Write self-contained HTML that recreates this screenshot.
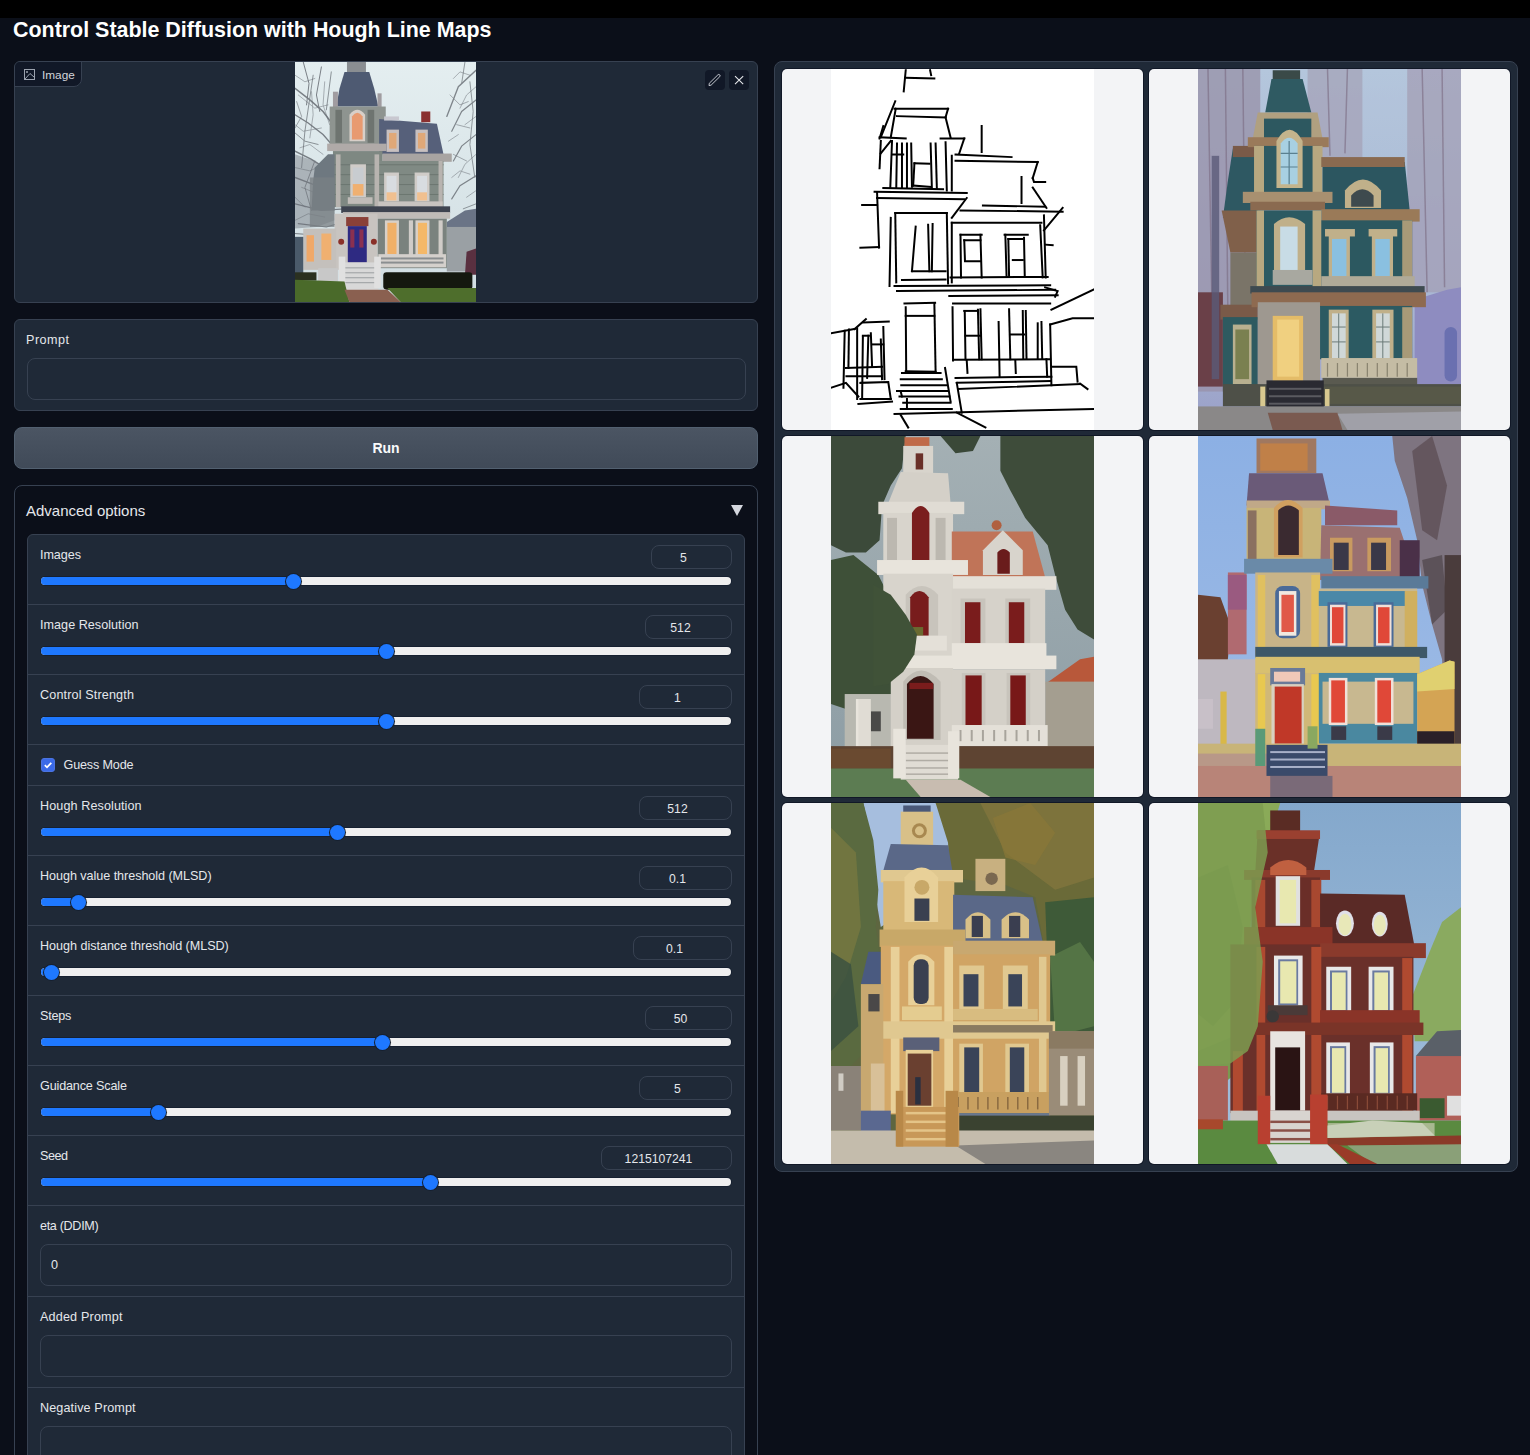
<!DOCTYPE html>
<html><head><meta charset="utf-8">
<style>
*{box-sizing:border-box;margin:0;padding:0}
html,body{width:1530px;height:1455px;overflow:hidden;background:#0b0f19;font-family:"Liberation Sans",sans-serif;color:#e5e7eb}
.a{position:absolute}
#topbar{left:0;top:0;width:1530px;height:18px;background:#000}
#title{left:13px;top:17px;font-size:21.43px;font-weight:700;color:#fff;white-space:nowrap;line-height:26px}
.blk{background:#1f2937;border:1px solid #374151;border-radius:6px}
.lbl{font-size:12.6px;color:#e5e7eb;white-space:nowrap;line-height:14px}
.inp{background:#1f2937;border:1px solid #374151;border-radius:8px}
.num{border:1px solid #374151;border-radius:8px;background:#1f2937;height:24px;font-size:12.2px;color:#e5e7eb;text-align:center;line-height:24px;padding-right:16px}
.sep{left:27px;width:718px;height:1px;background:#374151}
.track{height:8px;border-radius:4px;background:#efefef;box-shadow:0 0 0 1px #162030}
.fill{left:0;top:0;height:8px;border-radius:4px 0 0 4px;background:#1e78ff}
.thumb{width:15px;height:15px;border-radius:50%;background:#1e78ff;top:-3.5px;box-shadow:0 0 0 1px #162030}
.cell{background:#f3f4f6;border-radius:5px;width:361px;height:361px;overflow:hidden;box-shadow:0 0 0 1px #111827}
.cell svg{position:absolute;left:49px;top:0;width:263px;height:361px}
</style></head><body>
<div id="topbar" class="a"></div>
<div id="title" class="a">Control Stable Diffusion with Hough Line Maps</div>

<!-- Image input block -->
<div class="a blk" style="left:14px;top:61px;width:744px;height:242px;overflow:hidden">
  <div class="a" style="left:-1px;top:-1px;width:68px;height:26px;background:#111827;border:1px solid #374151;border-radius:0 0 8px 0"></div>
  <svg class="a" style="left:9px;top:7px" width="11" height="11" viewBox="0 0 11 11"><rect x="0.5" y="0.5" width="10" height="10" fill="none" stroke="#9ca3af" stroke-width="1"/><circle cx="3" cy="3" r="1" fill="#9ca3af"/><path d="M1 10 L6 4.5 L10 8" fill="none" stroke="#9ca3af" stroke-width="1"/></svg>
  <div class="a" style="left:27px;top:5.5px;font-size:11.8px;color:#d1d5db;line-height:14px">Image</div>
  <div id="photo" class="a" style="left:280px;top:0px;width:181px;height:240px;background:#dfe5ea;overflow:hidden"><svg width="181" height="240" viewBox="0 0 1097 1455" preserveAspectRatio="none" style="position:absolute;left:0;top:0">
<defs><linearGradient id="psky" x1="0" y1="0" x2="0" y2="1"><stop offset="0" stop-color="#e4eef0"/><stop offset="1" stop-color="#d0dde2"/></linearGradient></defs>
<rect width="1097" height="1455" fill="url(#psky)"/>
<!-- trees left -->
<g stroke="#5e636a" fill="none" opacity="0.8" stroke-linecap="round">
<path d="M0 160 L90 230 L170 300 L230 380 L260 500" stroke-width="9"/><path d="M0 320 L80 370 L170 440 L240 520" stroke-width="8"/><path d="M50 0 L85 130 L70 260" stroke-width="6"/><path d="M160 30 L130 200 L150 300" stroke-width="6"/>
<path d="M0 540 L100 590 L210 660 L300 740" stroke-width="9"/><path d="M0 700 L130 750 L280 810 L360 850" stroke-width="8"/><path d="M0 860 L160 900 L300 890 L380 860" stroke-width="8"/><path d="M20 980 L190 1000 L330 960" stroke-width="7"/>
<path d="M0 1040 L140 1050" stroke-width="6"/><path d="M220 60 L190 290" stroke-width="5"/><path d="M110 80 L60 420 L40 640" stroke-width="5"/><path d="M0 430 L60 480 L140 500" stroke-width="5"/>
<path d="M10 240 L40 330 L0 400" stroke-width="4"/><path d="M120 600 L60 760 L100 900" stroke-width="5"/><path d="M200 760 L150 880" stroke-width="5"/>
</g>
<path d="M0 560 L120 600 L230 700 L240 960 L130 1000 L0 1010 Z" fill="#70767e" opacity="0.45"/>
<!-- trees right -->
<g stroke="#5e636a" fill="none" opacity="0.75" stroke-linecap="round">
<path d="M1097 50 L990 150 L920 330" stroke-width="8"/><path d="M1097 230 L1010 300 L950 420" stroke-width="7"/><path d="M1097 440 L1010 510 L960 600" stroke-width="7"/><path d="M1097 690 L1000 750 L950 830" stroke-width="7"/><path d="M1030 0 L1010 130" stroke-width="5"/><path d="M1097 860 L1020 890" stroke-width="5"/>
<path d="M940 200 L1000 260 L1050 240" stroke-width="4"/><path d="M980 380 L1060 400" stroke-width="4"/><path d="M960 560 L1040 600" stroke-width="4"/><path d="M1060 120 L1080 300 L1060 500 L1090 700" stroke-width="5"/>
</g>
<g stroke="#6a6f76" fill="none" opacity="0.6" stroke-linecap="round" stroke-width="5">
<path d="M0 80 L60 120 L120 100"/><path d="M20 200 L120 280 L200 260"/><path d="M0 380 L50 420 L160 400"/><path d="M30 520 L90 500 L170 560"/><path d="M0 640 L90 660 L180 620"/><path d="M40 760 L140 800 L230 760"/><path d="M0 820 L60 880"/><path d="M100 180 L110 320 L90 460"/><path d="M180 120 L170 260 L210 380"/><path d="M0 960 L80 920 L180 940"/>
<path d="M1097 150 L1040 200 L1000 280"/><path d="M1097 330 L1030 380"/><path d="M1097 560 L1030 620 L990 700"/><path d="M1097 780 L1040 820"/><path d="M960 100 L1000 60 L1060 80"/><path d="M930 480 L990 440"/><path d="M950 700 L1000 660 L1060 680"/>
</g>
<!-- right house -->
<polygon points="920,970 1030,900 1097,890 1097,1000 920,1010" fill="#6a7486"/>
<rect x="920" y="1000" width="177" height="270" fill="#9aa0a4"/>
<path d="M1040 1150 L1097 1130 L1097 1290 L1030 1290 Z" fill="#5a3040"/>
<!-- tower top -->
<rect x="315" y="0" width="115" height="65" fill="#8a8e92"/>
<polygon points="300,60 450,60 480,160 505,270 250,270 270,160" fill="#4e5a72"/>
<rect x="230" y="180" width="30" height="100" fill="#a09ca0"/><rect x="500" y="190" width="25" height="90" fill="#a09ca0"/>
<!-- tower body -->
<rect x="210" y="270" width="340" height="240" fill="#8e9490"/>
<rect x="245" y="290" width="40" height="200" fill="#6e7470"/><rect x="440" y="290" width="40" height="200" fill="#6e7470"/>
<path d="M330 480 L330 320 Q378 260 425 320 L425 480 Z" fill="#d8cfc8"/>
<path d="M345 470 L345 330 Q378 285 410 330 L410 470 Z" fill="#e89a70"/>
<!-- main mansard -->
<polygon points="510,345 860,375 900,560 510,560" fill="#56607a"/>
<rect x="540" y="330" width="90" height="25" fill="#c8c8d0"/>
<rect x="765" y="300" width="55" height="65" fill="#8a3030"/>
<rect x="555" y="410" width="75" height="135" fill="#c8c0c0"/><rect x="570" y="430" width="45" height="95" fill="#e0a878"/>
<rect x="730" y="410" width="75" height="135" fill="#c8c0c0"/><rect x="745" y="430" width="45" height="95" fill="#e0a878"/>
<!-- cornice -->
<rect x="195" y="495" width="360" height="45" fill="#b0aaa8"/>
<rect x="530" y="555" width="420" height="50" fill="#a8a4a2"/>
<!-- main facade -->
<rect x="230" y="540" width="300" height="340" fill="#7e8882"/>
<rect x="510" y="600" width="390" height="280" fill="#808a84"/>
<g fill="#6c7670"><rect x="230" y="620" width="670" height="6"/><rect x="230" y="680" width="670" height="6"/><rect x="230" y="740" width="670" height="6"/><rect x="230" y="800" width="670" height="6"/></g>
<rect x="248" y="560" width="28" height="320" fill="#b8b4b0"/><rect x="482" y="560" width="28" height="320" fill="#b8b4b0"/><rect x="870" y="600" width="25" height="280" fill="#b8b4b0"/>
<rect x="335" y="620" width="95" height="200" fill="#d0ccc8"/><rect x="350" y="640" width="65" height="170" fill="#c8ccd0"/><rect x="350" y="740" width="65" height="70" fill="#f0b070"/>
<rect x="540" y="670" width="90" height="175" fill="#d0ccc8"/><rect x="555" y="690" width="60" height="150" fill="#d8dce0"/><rect x="555" y="790" width="60" height="50" fill="#f0c090"/>
<rect x="725" y="670" width="90" height="175" fill="#d0ccc8"/><rect x="740" y="690" width="60" height="150" fill="#d8dce0"/><rect x="740" y="790" width="60" height="50" fill="#f0c090"/>
<rect x="320" y="820" width="150" height="40" fill="#c0bcb8"/><rect x="505" y="845" width="390" height="35" fill="#c8c4c0"/>
<!-- left wing -->
<polygon points="120,640 200,560 240,560 240,900 100,900 110,720" fill="#6e7880"/>
<rect x="90" y="700" width="150" height="300" fill="#7a8084" opacity="0.75"/>
<!-- porch roof -->
<rect x="280" y="875" width="660" height="40" fill="#3e4450"/>
<rect x="290" y="910" width="650" height="40" fill="#c0bcb8"/>
<!-- porch -->
<rect x="500" y="950" width="420" height="300" fill="#7a827e"/>
<rect x="545" y="960" width="85" height="210" fill="#d8d0c8"/><rect x="560" y="975" width="55" height="190" fill="#f0b068"/>
<rect x="730" y="960" width="85" height="210" fill="#d8d0c8"/><rect x="745" y="975" width="55" height="190" fill="#f4b868"/>
<rect x="690" y="960" width="25" height="270" fill="#d0ccc8"/><rect x="870" y="960" width="25" height="270" fill="#d0ccc8"/>
<rect x="505" y="1165" width="410" height="80" fill="#d4d0cc"/>
<g fill="#8a8e90"><rect x="520" y="1185" width="380" height="12"/><rect x="520" y="1210" width="380" height="12"/></g>
<rect x="240" y="920" width="260" height="340" fill="#c8c4c0"/>
<rect x="310" y="940" width="135" height="55" fill="#8a4038"/>
<rect x="320" y="995" width="115" height="220" fill="#2e2a82"/>
<rect x="335" y="1015" width="25" height="110" fill="#8a3050"/><rect x="390" y="1015" width="25" height="110" fill="#8a3050"/>
<circle cx="280" cy="1090" r="18" fill="#8a3028"/><circle cx="478" cy="1090" r="18" fill="#8a3028"/>
<!-- left bay -->
<rect x="50" y="1010" width="200" height="250" fill="#c4c0bc"/>
<rect x="70" y="1050" width="45" height="160" fill="#f0a868"/><rect x="160" y="1040" width="60" height="160" fill="#f0b070"/>
<rect x="0" y="1060" width="50" height="220" fill="#4a5a6a"/>
<!-- steps -->
<rect x="295" y="1215" width="210" height="170" fill="#d8d8d8"/>
<g fill="#9a9ea0"><rect x="300" y="1245" width="200" height="6"/><rect x="300" y="1275" width="200" height="6"/><rect x="300" y="1305" width="200" height="6"/><rect x="300" y="1335" width="200" height="6"/></g>
<rect x="265" y="1180" width="40" height="190" fill="#e0e0e0"/><rect x="480" y="1180" width="40" height="190" fill="#e0e0e0"/>
<rect x="140" y="1250" width="120" height="80" fill="#c8c8c8"/>
<!-- hedge -->
<rect x="535" y="1275" width="540" height="105" rx="20" fill="#14180f"/>
<rect x="0" y="1275" width="130" height="50" fill="#2a3020"/>
<!-- grass -->
<polygon points="0,1320 300,1330 330,1455 0,1455" fill="#4a6a2a"/>
<polygon points="560,1370 1097,1370 1097,1455 640,1455" fill="#4e6e2c"/>
<polygon points="300,1380 560,1380 640,1455 330,1455" fill="#8a6050"/>
</svg>
</div>
  <div class="a" style="left:690px;top:8px;width:20px;height:20px;background:#111827;border-radius:4px"><svg class="a" style="left:0;top:0" width="20" height="20" viewBox="0 0 20 20"><path d="M4.29 13.27 L12.89 4.87 A1.3 1.3 0 0 1 14.71 6.73 L6.11 15.13 L4 15.6 Z" fill="none" stroke="#d1d5db" stroke-width="0.9" stroke-linejoin="round"/></svg></div>
  <div class="a" style="left:714px;top:8px;width:20px;height:20px;background:#111827;border-radius:4px"><svg class="a" style="left:0;top:0" width="20" height="20" viewBox="0 0 20 20"><path d="M6 6.2 L14.2 14.2 M14.2 6.2 L6 14.2" fill="none" stroke="#e5e7eb" stroke-width="1.1"/></svg></div>
</div>

<!-- Prompt block -->
<div class="a blk" style="left:14px;top:319px;width:744px;height:92px">
  <div class="a lbl" style="left:11px;top:13px;letter-spacing:0.48px">Prompt</div>
  <div class="a inp" style="left:12px;top:38px;width:719px;height:42px"></div>
</div>

<!-- Run button -->
<div class="a" style="left:14px;top:427px;width:744px;height:42px;border-radius:8px;background:linear-gradient(#4b5563,#404a58);border:1px solid #526070;font-weight:700;font-size:14px;color:#f9fafb;text-align:center;line-height:40px">Run</div>

<!-- Accordion -->
<div class="a" style="left:14px;top:485px;width:744px;height:1000px;border:1px solid #374151;border-radius:8px;background:#0b0f19"></div>
<div class="a" style="left:26px;top:502px;font-size:15px;color:#e5e7eb;line-height:18px;white-space:nowrap">Advanced options</div>
<svg class="a" style="left:730px;top:504px" width="14" height="13" viewBox="0 0 14 13"><polygon points="1,1 13,1 7,12" fill="#d4d7de"/></svg>
<div id="form" class="a" style="left:27px;top:534px;width:718px;height:1000px;background:#1f2937;border:1px solid #374151;border-radius:6px"></div>
<div class="a sep" style="top:604px"></div>
<div class="a sep" style="top:674px"></div>
<div class="a sep" style="top:744px"></div>
<div class="a sep" style="top:785px"></div>
<div class="a sep" style="top:855px"></div>
<div class="a sep" style="top:925px"></div>
<div class="a sep" style="top:995px"></div>
<div class="a sep" style="top:1065px"></div>
<div class="a sep" style="top:1135px"></div>
<div class="a sep" style="top:1205px"></div>
<div class="a sep" style="top:1296px"></div>
<div class="a sep" style="top:1387px"></div>
<div class="a lbl" style="left:40px;top:548px;letter-spacing:-0.06px">Images</div>
<div class="a num" style="left:651px;top:545px;width:81px">5</div>
<div class="a track" style="left:41px;top:577px;width:690px"><div class="a fill" style="width:252.5px"></div><div class="a thumb" style="left:245.0px"></div></div>
<div class="a lbl" style="left:40px;top:618px;letter-spacing:0.033px">Image Resolution</div>
<div class="a num" style="left:645px;top:615px;width:87px">512</div>
<div class="a track" style="left:41px;top:647px;width:690px"><div class="a fill" style="width:345px"></div><div class="a thumb" style="left:337.5px"></div></div>
<div class="a lbl" style="left:40px;top:688px;letter-spacing:0.147px">Control Strength</div>
<div class="a num" style="left:639px;top:685px;width:93px">1</div>
<div class="a track" style="left:41px;top:717px;width:690px"><div class="a fill" style="width:345px"></div><div class="a thumb" style="left:337.5px"></div></div>
<div class="a lbl" style="left:40px;top:799px;letter-spacing:0.1px">Hough Resolution</div>
<div class="a num" style="left:639px;top:796px;width:93px">512</div>
<div class="a track" style="left:41px;top:828px;width:690px"><div class="a fill" style="width:296px"></div><div class="a thumb" style="left:288.5px"></div></div>
<div class="a lbl" style="left:40px;top:869px;letter-spacing:-0.048px">Hough value threshold (MLSD)</div>
<div class="a num" style="left:639px;top:866px;width:93px">0.1</div>
<div class="a track" style="left:41px;top:898px;width:690px"><div class="a fill" style="width:37.3px"></div><div class="a thumb" style="left:29.799999999999997px"></div></div>
<div class="a lbl" style="left:40px;top:939px;letter-spacing:-0.03px">Hough distance threshold (MLSD)</div>
<div class="a num" style="left:633px;top:936px;width:99px">0.1</div>
<div class="a track" style="left:41px;top:968px;width:690px"><div class="a fill" style="width:10px"></div><div class="a thumb" style="left:2.5px"></div></div>
<div class="a lbl" style="left:40px;top:1009px;letter-spacing:-0.25px">Steps</div>
<div class="a num" style="left:645px;top:1006px;width:87px">50</div>
<div class="a track" style="left:41px;top:1038px;width:690px"><div class="a fill" style="width:341px"></div><div class="a thumb" style="left:333.5px"></div></div>
<div class="a lbl" style="left:40px;top:1079px;letter-spacing:-0.154px">Guidance Scale</div>
<div class="a num" style="left:639px;top:1076px;width:93px">5</div>
<div class="a track" style="left:41px;top:1108px;width:690px"><div class="a fill" style="width:117px"></div><div class="a thumb" style="left:109.5px"></div></div>
<div class="a lbl" style="left:40px;top:1149px;letter-spacing:-0.467px">Seed</div>
<div class="a num" style="left:601px;top:1146px;width:131px">1215107241</div>
<div class="a track" style="left:41px;top:1178px;width:690px"><div class="a fill" style="width:389px"></div><div class="a thumb" style="left:381.5px"></div></div>
<div class="a" style="left:41px;top:758px;width:14px;height:14px;border-radius:3px;background:#3b6ae8;border:1px solid #4b74e0"><svg class="a" style="left:1px;top:1px" width="10" height="10" viewBox="0 0 10 10"><path d="M1.8 5.2 L4 7.3 L8.3 2.8" fill="none" stroke="#fff" stroke-width="1.8"/></svg></div>
<div class="a lbl" style="left:63.5px;top:758px;letter-spacing:-0.156px">Guess Mode</div>
<div class="a lbl" style="left:40px;top:1219px;letter-spacing:-0.322px">eta (DDIM)</div>
<div class="a inp" style="left:40px;top:1244px;width:692px;height:42px"></div>
<div class="a lbl" style="left:51px;top:1258px">0</div>
<div class="a lbl" style="left:40px;top:1310px;letter-spacing:0.173px">Added Prompt</div>
<div class="a inp" style="left:40px;top:1335px;width:692px;height:42px"></div>
<div class="a lbl" style="left:40px;top:1401px;letter-spacing:0.129px">Negative Prompt</div>
<div class="a inp" style="left:40px;top:1426px;width:692px;height:42px"></div>

<!-- Gallery -->
<div class="a" style="left:774px;top:61px;width:744px;height:1111px;background:#1f2937;border:1px solid #374151;border-radius:8px"></div>
<div class="a cell" style="left:782px;top:69px"><svg width="262" height="361" viewBox="0 0 1056 1455" preserveAspectRatio="none" style="position:absolute;left:49px;top:0">
<rect width="1056" height="1455" fill="#fff"/>
<g stroke="#000" stroke-width="8" fill="none" stroke-linecap="square">
<path d="M300 5 L292 90"/><path d="M298 35 L415 38"/><path d="M398 5 L402 25"/>
<path d="M258 130 L200 275"/><path d="M210 230 L195 280"/><path d="M255 160 L470 160"/><path d="M260 160 L240 275"/><path d="M265 190 L460 195"/><path d="M470 160 L460 195"/><path d="M460 195 L480 275"/>
<path d="M195 275 L300 280"/><path d="M440 280 L535 280"/><path d="M535 280 L515 340"/><path d="M200 290 L195 400"/><path d="M200 340 L240 290"/>
<path d="M245 290 L238 480"/><path d="M265 300 L262 480"/><path d="M285 300 L285 480"/><path d="M305 300 L305 480"/><path d="M322 300 L325 475"/><path d="M400 300 L405 480"/><path d="M420 300 L425 480"/><path d="M460 295 L465 490"/><path d="M485 350 L485 490"/>
<path d="M335 380 L395 382"/><path d="M335 380 L330 470"/><path d="M330 470 L400 475"/><path d="M245 345 L290 345"/><path d="M210 480 L450 485"/>
<path d="M500 345 L725 355"/><path d="M500 370 L830 375"/><path d="M830 375 L810 440"/><path d="M810 440 L815 455 L860 455"/><path d="M605 230 L605 335"/><path d="M765 435 L765 540"/><path d="M810 478 L865 560"/><path d="M610 550 L860 555"/>
<path d="M175 495 L545 500"/><path d="M185 500 L193 720"/><path d="M125 548 L185 548"/><path d="M118 720 L193 718"/><path d="M185 520 L535 525"/><path d="M545 520 L485 600"/><path d="M520 570 L930 575"/><path d="M930 560 L855 650"/>
<path d="M240 600 L235 875"/><path d="M258 580 L262 860"/><path d="M258 580 L465 580"/><path d="M465 580 L470 865"/><path d="M340 635 L325 815"/><path d="M390 628 L395 815"/><path d="M408 625 L405 815"/><path d="M325 815 L460 815"/><path d="M285 850 L460 848"/>
<path d="M485 620 L485 860"/><path d="M485 620 L845 620"/><path d="M520 668 L605 668"/><path d="M520 668 L522 840"/><path d="M535 690 L600 690"/><path d="M535 690 L538 775 L600 775"/><path d="M600 668 L605 840"/>
<path d="M697 668 L790 668"/><path d="M700 668 L705 838"/><path d="M712 685 L775 685"/><path d="M712 685 L715 838"/><path d="M730 770 L770 770"/><path d="M775 680 L778 838"/>
<path d="M840 630 L850 840"/><path d="M855 590 L862 840"/><path d="M862 708 L890 710"/><path d="M480 840 L870 838"/><path d="M255 875 L880 872"/><path d="M265 895 L900 890"/><path d="M860 880 L910 895 L900 918"/><path d="M475 915 L910 912"/>
<path d="M295 945 L418 942"/><path d="M300 960 L302 1220"/><path d="M300 995 L415 995"/><path d="M415 945 L420 1220"/><path d="M300 1218 L420 1220"/>
<path d="M490 945 L880 945"/><path d="M488 960 L490 1175"/><path d="M535 975 L590 975"/><path d="M537 975 L540 1170"/><path d="M540 1075 L600 1075"/><path d="M590 970 L595 1170"/><path d="M600 968 L605 1170"/><path d="M673 1020 L677 1240"/><path d="M715 968 L720 1170"/><path d="M720 1070 L775 1070"/><path d="M770 975 L772 1165"/><path d="M782 975 L785 1165"/><path d="M830 1025 L830 1165"/><path d="M845 1020 L848 1165"/>
<path d="M490 1172 L880 1170"/><path d="M545 1175 L548 1225"/><path d="M740 1175 L742 1225"/><path d="M865 1170 L868 1240"/><path d="M880 1030 L885 1275"/><path d="M880 1030 L970 1005 L1056 1005"/><path d="M885 970 L1056 888"/><path d="M890 1200 L985 1200 L990 1260"/><path d="M1000 1268 L1030 1290"/>
<path d="M285 1225 L440 1225"/><path d="M280 1250 L445 1250"/><path d="M282 1275 L462 1275"/><path d="M265 1298 L470 1298"/><path d="M275 1320 L475 1320"/><path d="M290 1345 L480 1345"/><path d="M280 1370 L485 1370"/><path d="M458 1205 L480 1340"/><path d="M280 1300 L285 1320"/><path d="M305 1330 L305 1370"/>
<path d="M500 1245 L885 1240"/><path d="M505 1265 L880 1258"/><path d="M505 1265 L525 1385"/><path d="M510 1290 L1000 1270"/><path d="M255 1390 L1056 1370"/><path d="M280 1395 L310 1445"/><path d="M505 1385 L620 1445"/>
<path d="M0 1065 L95 1048"/><path d="M95 1048 L140 1008"/><path d="M130 1022 L232 1018"/><path d="M55 1055 L50 1285"/><path d="M72 1050 L70 1205"/><path d="M105 1045 L105 1330"/><path d="M128 1078 L125 1330"/><path d="M128 1075 L152 1075"/><path d="M150 1075 L145 1245"/><path d="M160 1065 L165 1200"/><path d="M165 1110 L210 1110"/><path d="M210 1040 L215 1250"/><path d="M200 1090 L205 1250"/><path d="M60 1205 L205 1200"/><path d="M62 1238 L205 1238"/><path d="M0 1285 L60 1265 L110 1320"/><path d="M118 1265 L230 1262 L240 1330"/><path d="M118 1330 L240 1330"/><path d="M110 1350 L245 1340"/>
</g>
</svg>
</div>
<div class="a cell" style="left:1149px;top:69px"><svg width="262" height="361" viewBox="0 0 1056 1455" preserveAspectRatio="none" style="position:absolute;left:49px;top:0">
<defs>
<linearGradient id="s1" x1="0" y1="0" x2="0" y2="1"><stop offset="0" stop-color="#b4c6dc"/><stop offset="0.6" stop-color="#aab8d4"/><stop offset="1" stop-color="#9aa0c8"/></linearGradient>
</defs>
<rect width="1056" height="1455" fill="url(#s1)"/>
<!-- trees -->
<rect x="0" y="0" width="250" height="1300" fill="#9890a8" opacity="0.75"/>
<rect x="440" y="0" width="220" height="360" fill="#a098ac" opacity="0.55"/>
<rect x="840" y="0" width="216" height="900" fill="#a29cb4" opacity="0.7"/>
<g stroke="#7a6a80" stroke-width="6" opacity="0.6"><path d="M40 0 L60 1200"/><path d="M110 0 L120 1000"/><path d="M180 0 L190 900"/><path d="M900 0 L920 900"/><path d="M980 0 L990 880"/><path d="M520 0 L530 350"/><path d="M600 0 L590 340"/></g>
<rect x="0" y="900" width="100" height="380" fill="#6a4048"/>
<rect x="55" y="350" width="30" height="900" fill="#5a5a78" opacity="0.8"/>
<!-- right building -->
<polygon points="870,930 1000,890 1056,880 1056,1290 870,1290" fill="#8e8cc0"/>
<rect x="990" y="1040" width="50" height="220" rx="25" fill="#6a70b0"/>
<!-- tower spire -->
<rect x="300" y="5" width="110" height="40" fill="#3a4a48"/>
<polygon points="295,40 420,40 455,175 270,175" fill="#2f5a62"/>
<!-- left wing -->
<polygon points="140,320 240,320 240,600 100,600 120,450" fill="#2e5862"/>
<rect x="140" y="310" width="100" height="45" fill="#7a5a48"/>
<polygon points="95,570 240,570 240,740 130,740" fill="#80604a"/>
<rect x="130" y="740" width="110" height="220" fill="#7a7468"/>
<rect x="90" y="950" width="150" height="60" fill="#7a5a48"/>
<rect x="100" y="1000" width="140" height="300" fill="#2e5a60"/>
<rect x="140" y="1030" width="75" height="240" fill="#b8b090"/><rect x="150" y="1050" width="55" height="200" fill="#7a8050"/>
<!-- tower body -->
<polygon points="240,175 480,175 500,280 220,280" fill="#b0a080"/>
<rect x="265" y="200" width="190" height="80" fill="#2d5860"/>
<rect x="200" y="275" width="325" height="40" fill="#9a7a5a"/>
<rect x="225" y="310" width="270" height="200" fill="#2e5a62"/>
<rect x="225" y="310" width="40" height="200" fill="#b8a880"/><rect x="460" y="310" width="40" height="200" fill="#b8a880"/>
<path d="M315 480 L315 290 Q368 200 420 290 L420 480 Z" fill="#c4b48c"/>
<path d="M332 465 L332 300 Q366 255 400 300 L400 465 Z" fill="#a8d0e2"/>
<g stroke="#5a8090" stroke-width="5"><path d="M366 290 L366 465"/><path d="M332 340 L400 340"/><path d="M332 395 L400 395"/></g>
<!-- main mansard -->
<polygon points="500,365 830,375 850,570 500,570" fill="#2c5660"/>
<rect x="495" y="355" width="335" height="40" fill="#8a6a50"/>
<path d="M590 560 L590 490 Q662 400 735 490 L735 560 Z" fill="#c0b08a"/>
<path d="M615 555 L615 510 Q660 460 705 510 L705 555 Z" fill="#3e4a4e"/>
<!-- cornices -->
<rect x="180" y="495" width="360" height="45" fill="#a89070"/>
<rect x="210" y="535" width="300" height="35" fill="#8a6a50"/>
<rect x="495" y="565" width="395" height="50" fill="#9a7a58"/>
<!-- second floor -->
<rect x="235" y="570" width="260" height="310" fill="#2c5a62"/>
<rect x="490" y="610" width="370" height="270" fill="#2c5860"/>
<rect x="235" y="570" width="30" height="310" fill="#b8a880"/><rect x="460" y="570" width="35" height="310" fill="#b8a880"/><rect x="820" y="610" width="40" height="270" fill="#a89a78"/>
<path d="M305 815 L305 625 Q365 570 430 625 L430 815 Z" fill="#c0b08a"/>
<rect x="330" y="635" width="70" height="180" fill="#c8dce6"/>
<rect x="510" y="645" width="120" height="30" fill="#c0b08a"/><rect x="525" y="670" width="85" height="170" fill="#c0b08a"/><rect x="538" y="685" width="58" height="150" fill="#8ac0e0"/>
<rect x="685" y="645" width="115" height="30" fill="#c0b08a"/><rect x="698" y="670" width="85" height="170" fill="#c0b08a"/><rect x="712" y="685" width="58" height="150" fill="#8ac0e0"/>
<rect x="300" y="810" width="160" height="60" fill="#a8a8a0"/>
<rect x="495" y="835" width="375" height="45" fill="#b0aa98"/>
<!-- porch cornice -->
<rect x="210" y="875" width="700" height="30" fill="#3e4a50"/>
<rect x="215" y="900" width="700" height="60" fill="#8e6a50"/>
<!-- first floor -->
<rect x="490" y="955" width="370" height="215" fill="#2c5a62"/>
<rect x="525" y="970" width="80" height="200" fill="#c0b08a"/><rect x="538" y="985" width="55" height="180" fill="#d0d8d8"/>
<rect x="700" y="970" width="85" height="200" fill="#c0b08a"/><rect x="715" y="985" width="55" height="180" fill="#d0d8d8"/>
<g stroke="#6a7a78" stroke-width="4"><path d="M565 985 L565 1165"/><path d="M742 985 L742 1165"/><path d="M538 1040 L593 1040"/><path d="M538 1100 L593 1100"/><path d="M715 1040 L770 1040"/><path d="M715 1100 L770 1100"/></g>
<rect x="820" y="960" width="40" height="210" fill="#a89a78"/>
<!-- door bay -->
<rect x="240" y="940" width="250" height="330" fill="#9e9890"/>
<rect x="300" y="995" width="122" height="262" fill="#e4bc68"/>
<rect x="318" y="1010" width="88" height="230" fill="#f0d080"/>
<!-- porch rail -->
<rect x="495" y="1165" width="385" height="80" fill="#c4bca4"/>
<g stroke="#8a8470" stroke-width="5"><path d="M520 1185 L520 1240"/><path d="M560 1185 L560 1240"/><path d="M600 1185 L600 1240"/><path d="M640 1185 L640 1240"/><path d="M680 1185 L680 1240"/><path d="M720 1185 L720 1240"/><path d="M760 1185 L760 1240"/><path d="M800 1185 L800 1240"/><path d="M840 1185 L840 1240"/></g>
<rect x="500" y="1245" width="380" height="30" fill="#5a5a50"/>
<!-- foundation -->
<rect x="100" y="1270" width="956" height="90" fill="#4e5048"/>
<rect x="500" y="1280" width="556" height="70" fill="#5a5a48" opacity="0.8"/>
<!-- steps -->
<rect x="275" y="1255" width="230" height="115" fill="#2a2a32"/>
<g fill="#5a5a60"><rect x="285" y="1285" width="210" height="8"/><rect x="285" y="1315" width="210" height="8"/><rect x="285" y="1345" width="210" height="8"/></g>
<rect x="250" y="1280" width="20" height="80" fill="#d8c890"/><rect x="510" y="1290" width="18" height="70" fill="#d8c890"/>
<!-- ground -->
<rect x="0" y="1360" width="1056" height="95" fill="#8a8888"/>
<polygon points="280,1385 560,1385 580,1455 300,1455" fill="#7a5a50"/>
<polygon points="560,1390 1056,1380 1056,1455 600,1455" fill="#a0a0a8"/>
</svg>
</div>
<div class="a cell" style="left:782px;top:436px"><svg width="262" height="361" viewBox="0 0 1056 1455" preserveAspectRatio="none" style="position:absolute;left:49px;top:0">
<defs>
<linearGradient id="s2" x1="0" y1="0" x2="0" y2="1"><stop offset="0" stop-color="#a4b0b4"/><stop offset="1" stop-color="#8c9ca4"/></linearGradient>
</defs>
<rect width="1056" height="1455" fill="url(#s2)"/>
<!-- trees -->
<path d="M0 0 L300 0 L285 130 L240 200 L205 280 L195 420 L140 470 L60 470 L0 440 Z" fill="#3c4a3a"/>
<path d="M0 500 L90 480 L190 560 L250 680 L330 780 L340 870 L300 980 L240 1080 L150 1120 L60 1100 L0 1080 Z" fill="#3e5038"/>
<path d="M440 0 L600 0 L570 60 L500 70 Z" fill="#3a4838"/>
<path d="M680 0 L1056 0 L1056 820 L990 780 L940 700 L900 560 L870 440 L780 330 L720 220 L680 140 Z" fill="#3e4c3a"/>
<path d="M940 1000 L1056 960 L1056 1280 L920 1250 Z" fill="#4a5a40"/>
<!-- left faint building -->
<rect x="55" y="1040" width="190" height="220" fill="#b8b8b0"/>
<rect x="100" y="1060" width="50" height="280" fill="#e8e4dc"/>
<rect x="160" y="1110" width="40" height="80" fill="#4a4a48"/>
<!-- right house -->
<polygon points="860,1000 1000,900 1056,890 1056,1000" fill="#b8583a"/>
<rect x="860" y="990" width="196" height="270" fill="#a49e90"/>
<!-- cupola -->
<rect x="295" y="5" width="100" height="40" fill="#c06a48"/>
<rect x="290" y="40" width="120" height="110" fill="#d8d4cc"/>
<rect x="340" y="70" width="30" height="65" fill="#6a3028"/>
<!-- tower -->
<polygon points="280,145 470,150 480,270 230,270" fill="#d4d0c8"/>
<rect x="190" y="265" width="345" height="50" fill="#e0dcd4"/>
<rect x="210" y="310" width="280" height="195" fill="#d8d4cc"/>
<rect x="225" y="330" width="40" height="170" fill="#bcb8b0"/><rect x="420" y="330" width="40" height="170" fill="#bcb8b0"/>
<path d="M325 500 L325 310 Q360 255 395 310 L395 500 Z" fill="#7a1e1e"/>
<!-- roof -->
<polygon points="485,385 810,385 860,570 485,570" fill="#c07458"/>
<circle cx="665" cy="360" r="20" fill="#b06040"/>
<polygon points="610,460 690,380 770,460 770,560 610,560" fill="#d8d4cc"/>
<path d="M668 555 L668 470 Q692 440 718 470 L718 555 Z" fill="#6a1c1c"/>
<!-- cornice -->
<rect x="185" y="500" width="365" height="60" fill="#e8e4dc"/>
<rect x="485" y="565" width="420" height="55" fill="#e4e0d8"/>
<!-- second floor -->
<rect x="210" y="555" width="280" height="335" fill="#d8d4cc"/>
<rect x="485" y="615" width="375" height="275" fill="#d6d2ca"/>
<path d="M300 805 L300 640 Q365 570 430 640 L430 805 Z" fill="#c8c4bc"/>
<path d="M318 805 L318 650 Q355 600 392 650 L392 805 Z" fill="#781c1c"/>
<rect x="520" y="655" width="100" height="180" fill="#c8c4bc"/><rect x="538" y="670" width="62" height="165" fill="#7a1c1c"/>
<rect x="700" y="655" width="100" height="180" fill="#c8c4bc"/><rect x="714" y="670" width="62" height="165" fill="#7a1c1c"/>
<rect x="320" y="770" width="50" height="35" fill="#6a6a30"/>
<rect x="330" y="805" width="135" height="60" fill="#e4e0d8"/>
<rect x="485" y="835" width="380" height="55" fill="#e8e4dc"/>
<rect x="180" y="885" width="725" height="55" fill="#e8e4dc"/>
<!-- first floor -->
<rect x="240" y="935" width="250" height="320" fill="#d4d0c8"/>
<rect x="485" y="940" width="375" height="235" fill="#d4d0c8"/>
<path d="M290 1225 L290 990 Q360 900 440 990 L440 1225 Z" fill="#c0bcb4"/>
<path d="M305 1220 L305 1000 Q360 935 412 1000 L412 1220 Z" fill="#3a1614"/>
<rect x="315" y="995" width="95" height="25" fill="#7a1c1c"/>
<rect x="525" y="955" width="95" height="210" fill="#c8c4bc"/><rect x="540" y="965" width="65" height="200" fill="#781818"/>
<rect x="705" y="955" width="95" height="210" fill="#c8c4bc"/><rect x="720" y="965" width="62" height="200" fill="#781818"/>
<!-- porch rail -->
<rect x="485" y="1165" width="385" height="85" fill="#e4e0d8"/>
<g stroke="#a8a49c" stroke-width="8"><path d="M520 1185 L520 1230"/><path d="M565 1185 L565 1230"/><path d="M610 1185 L610 1230"/><path d="M655 1185 L655 1230"/><path d="M700 1185 L700 1230"/><path d="M745 1185 L745 1230"/><path d="M790 1185 L790 1230"/><path d="M835 1185 L835 1230"/></g>
<rect x="110" y="1060" width="50" height="280" fill="#e0dcd4"/>
<path d="M170 600 L240 640 L300 720 L345 800 L335 880 L290 950 L230 1000 L170 1010 Z" fill="#405238"/>
<!-- hedge -->
<rect x="0" y="1250" width="1056" height="95" fill="#5e4432"/>
<rect x="0" y="1260" width="240" height="80" fill="#6a4a30"/>
<!-- grass -->
<rect x="0" y="1340" width="1056" height="115" fill="#5c7c52"/>
<!-- steps -->
<rect x="280" y="1245" width="230" height="140" fill="#e0dcd4"/>
<g fill="#b0aca4"><rect x="300" y="1275" width="190" height="6"/><rect x="300" y="1305" width="190" height="6"/><rect x="300" y="1335" width="190" height="6"/><rect x="300" y="1360" width="190" height="6"/></g>
<rect x="250" y="1180" width="50" height="200" fill="#e8e4dc"/><rect x="470" y="1190" width="45" height="190" fill="#e8e4dc"/>
<polygon points="300,1385 520,1385 640,1455 360,1455" fill="#c8bcb0"/>
</svg>
</div>
<div class="a cell" style="left:1149px;top:436px"><svg width="262" height="361" viewBox="0 0 1056 1455" preserveAspectRatio="none" style="position:absolute;left:49px;top:0">
<defs>
<linearGradient id="s3" x1="0" y1="0" x2="0" y2="1"><stop offset="0" stop-color="#8cb0e4"/><stop offset="1" stop-color="#a0bce4"/></linearGradient>
</defs>
<rect width="1056" height="1455" fill="url(#s3)"/>
<!-- right tree -->
<path d="M780 0 L1056 0 L1056 1300 L1000 1300 L980 900 L940 760 L900 600 L880 420 L840 250 L790 100 Z" fill="#7e7480"/>
<path d="M860 60 L940 0 L1000 200 L960 420 L900 380 Z" fill="#5a4a50" opacity="0.7"/>
<path d="M900 500 L980 480 L1000 700 L940 760 Z" fill="#4e4448" opacity="0.7"/>
<rect x="990" y="480" width="66" height="975" fill="#4a3c3c"/>
<!-- left tree -->
<path d="M0 640 L90 650 L130 760 L120 900 L60 1000 L0 980 Z" fill="#6a4030"/>
<!-- left building -->
<rect x="0" y="900" width="240" height="390" fill="#beb8c0"/>
<rect x="120" y="550" width="75" height="330" fill="#b06a70"/>
<rect x="120" y="560" width="75" height="140" fill="#9a5a80"/>
<rect x="0" y="1060" width="60" height="120" fill="#c8c0c8"/>
<rect x="90" y="1030" width="25" height="280" fill="#d8b848"/>
<!-- tower top -->
<rect x="235" y="10" width="240" height="140" fill="#a07860"/>
<rect x="250" y="30" width="190" height="110" fill="#c08048"/>
<polygon points="205,150 500,150 530,280 195,280" fill="#6a5a78"/>
<rect x="195" y="260" width="335" height="35" fill="#c0a888"/>
<rect x="195" y="290" width="300" height="210" fill="#c8b478"/>
<path d="M305 490 L305 290 Q360 225 420 290 L420 490 Z" fill="#d0a060"/>
<path d="M322 480 L322 300 Q362 260 405 300 L405 480 Z" fill="#3a2a30"/>
<rect x="200" y="300" width="35" height="200" fill="#8a7060"/>
<!-- roof -->
<polygon points="510,280 800,300 800,360 510,360" fill="#8a5a68"/>
<polygon points="495,360 810,370 880,580 490,580" fill="#9a7070"/>
<rect x="810" y="420" width="80" height="160" fill="#4a3048"/>
<rect x="530" y="410" width="90" height="135" fill="#c89a60"/><rect x="545" y="430" width="60" height="110" fill="#3a3848"/>
<rect x="680" y="410" width="95" height="135" fill="#c89a60"/><rect x="695" y="430" width="60" height="110" fill="#3a3848"/>
<!-- cornices -->
<rect x="185" y="495" width="355" height="60" fill="#6a8aa8"/>
<rect x="495" y="565" width="430" height="50" fill="#5a7a98"/>
<!-- second floor -->
<rect x="230" y="550" width="260" height="335" fill="#c8b488"/>
<rect x="240" y="560" width="30" height="330" fill="#e0c060"/><rect x="455" y="560" width="35" height="330" fill="#e0c060"/>
<rect x="310" y="605" width="100" height="210" rx="30" fill="#4a6a98"/><rect x="325" y="625" width="70" height="180" fill="#f0e8e0"/>
<rect x="335" y="640" width="50" height="150" fill="#e05848"/>
<rect x="485" y="615" width="395" height="270" fill="#c8b890"/>
<rect x="485" y="625" width="350" height="60" fill="#4a88a8"/>
<rect x="520" y="670" width="80" height="180" fill="#4a6a98"/><rect x="530" y="680" width="62" height="165" fill="#f0e0d8"/><rect x="538" y="690" width="46" height="145" fill="#e04838"/>
<rect x="705" y="670" width="80" height="180" fill="#4a6a98"/><rect x="715" y="680" width="62" height="165" fill="#f0e0d8"/><rect x="723" y="690" width="46" height="145" fill="#e04838"/>
<rect x="830" y="625" width="50" height="260" fill="#d0b060"/>
<!-- band -->
<rect x="230" y="850" width="690" height="45" fill="#3e5868"/>
<rect x="230" y="890" width="660" height="70" fill="#d8c070"/>
<!-- first floor -->
<rect x="230" y="955" width="260" height="290" fill="#d0b878"/>
<rect x="240" y="960" width="30" height="280" fill="#e8c850"/><rect x="455" y="960" width="35" height="280" fill="#e8c850"/>
<rect x="290" y="935" width="140" height="70" fill="#6a7a98"/><rect x="305" y="950" width="105" height="40" fill="#f0c8b8"/>
<rect x="295" y="1000" width="130" height="245" fill="#d8d0c0"/>
<rect x="308" y="1010" width="108" height="230" fill="#c03828"/>
<rect x="485" y="955" width="395" height="285" fill="#4a88a0"/>
<rect x="500" y="990" width="365" height="170" fill="#c8b890"/>
<rect x="525" y="975" width="75" height="190" fill="#f0e0d8"/><rect x="535" y="985" width="55" height="170" fill="#e04838"/>
<rect x="710" y="975" width="75" height="190" fill="#f0e0d8"/><rect x="720" y="985" width="55" height="170" fill="#e04838"/>
<rect x="535" y="1170" width="60" height="55" fill="#3a3a48"/><rect x="720" y="1170" width="60" height="55" fill="#3a3a48"/>
<!-- right building -->
<polygon points="880,960 1010,905 1030,910 1030,1240 880,1240" fill="#d4a454"/>
<polygon points="880,960 1010,905 1030,910 1030,1020 880,1030" fill="#e0d070"/>
<rect x="880" y="1190" width="150" height="80" fill="#2a2028"/>
<!-- ground -->
<rect x="0" y="1240" width="1056" height="100" fill="#c8b478"/>
<rect x="0" y="1280" width="300" height="50" fill="#b89888"/>
<rect x="0" y="1330" width="1056" height="125" fill="#b88478"/>
<rect x="290" y="1370" width="250" height="85" fill="#7a6a78"/>
<!-- steps -->
<rect x="275" y="1245" width="245" height="125" fill="#3a4a6a"/>
<g fill="#a8b0c8"><rect x="290" y="1270" width="220" height="8"/><rect x="290" y="1300" width="220" height="8"/><rect x="290" y="1330" width="220" height="8"/></g>
<rect x="230" y="1180" width="40" height="150" fill="#5a9a78"/><rect x="440" y="1170" width="40" height="90" fill="#8aa860"/>
</svg>
</div>
<div class="a cell" style="left:782px;top:803px"><svg width="262" height="361" viewBox="0 0 1056 1455" preserveAspectRatio="none" style="position:absolute;left:49px;top:0">
<rect width="1056" height="1455" fill="#5e6640"/>
<!-- sky -->
<path d="M130 0 L420 0 L480 80 L470 200 L490 300 L200 500 L180 380 L170 200 Z" fill="#a6bede"/>
<!-- trees -->
<path d="M0 0 L130 0 L170 150 L190 350 L180 500 L200 650 L160 800 L140 1000 L80 1060 L0 1060 Z" fill="#5a6a40"/>
<path d="M0 100 L100 200 L120 500 L60 700 L0 800 Z" fill="#7a7a40" opacity="0.7"/>
<path d="M0 600 L80 650 L110 900 L0 1000 Z" fill="#3a5040" opacity="0.8"/>
<path d="M420 0 L1056 0 L1056 1000 L880 950 L860 600 L820 380 L700 330 L480 300 L470 160 Z" fill="#6a6a38"/>
<path d="M600 0 L1056 0 L1056 300 L900 350 L700 200 Z" fill="#8a7a40" opacity="0.6"/>
<path d="M860 400 L1056 380 L1056 980 L880 940 Z" fill="#3e5a38"/>
<path d="M880 620 L1000 560 L1056 640 L1056 900 L900 940 Z" fill="#5a7a48" opacity="0.8"/>
<path d="M650 60 L800 0 L900 120 L820 250 L700 220 Z" fill="#8a7838" opacity="0.7"/>
<!-- left street building -->
<rect x="0" y="1060" width="130" height="260" fill="#8a8278"/>
<rect x="30" y="1090" width="20" height="70" fill="#d0ccc4"/>
<!-- cupola -->
<rect x="290" y="10" width="110" height="30" fill="#4a5878"/>
<rect x="280" y="35" width="130" height="135" fill="#d8c088"/>
<circle cx="355" cy="112" r="30" fill="#a88850"/><circle cx="355" cy="112" r="18" fill="#d8c088"/>
<!-- tower mansard -->
<polygon points="240,165 470,170 490,290 205,290" fill="#5a6888"/>
<rect x="200" y="270" width="330" height="50" fill="#e0c890"/>
<rect x="210" y="315" width="285" height="205" fill="#d8b878"/>
<path d="M295 480 L295 300 Q365 220 430 300 L430 480 Z" fill="#e8d098"/>
<rect x="335" y="385" width="60" height="90" fill="#3a4050"/>
<circle cx="365" cy="340" r="30" fill="#c8a868"/>
<!-- upper dormer/chimney -->
<rect x="580" y="225" width="120" height="130" fill="#c8b080"/>
<circle cx="645" cy="305" r="25" fill="#7a6850"/>
<!-- main roof -->
<polygon points="490,370 810,380 850,560 490,560" fill="#5a6888"/>
<path d="M540 545 L540 470 Q590 410 640 470 L640 545 Z" fill="#d8c088"/><rect x="565" y="455" width="45" height="85" fill="#3a3e50"/>
<path d="M685 545 L685 470 Q740 410 795 470 L795 545 Z" fill="#d8c088"/><rect x="715" y="455" width="45" height="85" fill="#3a3e50"/>
<!-- left wing roof -->
<polygon points="150,600 200,600 200,730 120,730" fill="#4a5a80"/>
<!-- cornice -->
<rect x="195" y="510" width="345" height="70" fill="#c8a868"/>
<rect x="490" y="555" width="410" height="60" fill="#c8a870"/>
<!-- body -->
<rect x="200" y="575" width="290" height="680" fill="#d4a868"/>
<rect x="485" y="610" width="395" height="640" fill="#d0a464"/>
<rect x="240" y="580" width="35" height="670" fill="#e8d098"/><rect x="455" y="580" width="35" height="670" fill="#e8d098"/><rect x="835" y="620" width="30" height="630" fill="#e0c890"/>
<path d="M310 815 L310 640 Q360 580 415 640 L415 815 Z" fill="#e8d098"/>
<rect x="332" y="630" width="60" height="180" rx="25" fill="#3a4050"/>
<rect x="515" y="655" width="100" height="180" fill="#e0c890"/><rect x="532" y="690" width="60" height="130" fill="#3a4458"/>
<rect x="690" y="655" width="100" height="180" fill="#e0c890"/><rect x="712" y="690" width="55" height="130" fill="#3a4458"/>
<rect x="285" y="820" width="160" height="55" fill="#e4cc90"/>
<rect x="490" y="830" width="340" height="45" fill="#d8bc80"/>
<rect x="200" y="880" width="700" height="70" fill="#e0c890"/>
<rect x="490" y="895" width="400" height="30" fill="#8a7a60"/>
<!-- first floor -->
<rect x="290" y="945" width="145" height="55" fill="#5a6078"/>
<rect x="300" y="995" width="110" height="230" fill="#e8d098"/>
<rect x="308" y="1010" width="95" height="210" fill="#6a4030"/>
<rect x="338" y="1105" width="22" height="110" fill="#2a3040"/>
<rect x="515" y="970" width="95" height="200" fill="#e0c890"/><rect x="535" y="985" width="60" height="180" fill="#3a4458"/>
<rect x="700" y="970" width="95" height="200" fill="#e0c890"/><rect x="718" y="985" width="58" height="180" fill="#3a4458"/>
<!-- left wing -->
<rect x="120" y="730" width="90" height="520" fill="#c8a870"/>
<rect x="150" y="770" width="45" height="70" fill="#4a4848"/>
<rect x="160" y="1050" width="55" height="210" fill="#d8c098"/>
<rect x="120" y="1240" width="120" height="85" fill="#5a6890"/>
<!-- porch rail -->
<rect x="480" y="1165" width="400" height="85" fill="#c8a060"/>
<g stroke="#8a6a40" stroke-width="6"><path d="M510 1185 L510 1235"/><path d="M550 1185 L550 1235"/><path d="M590 1185 L590 1235"/><path d="M630 1185 L630 1235"/><path d="M670 1185 L670 1235"/><path d="M710 1185 L710 1235"/><path d="M750 1185 L750 1235"/><path d="M790 1185 L790 1235"/><path d="M830 1185 L830 1235"/></g>
<rect x="500" y="1250" width="380" height="30" fill="#6a7890"/>
<!-- right building -->
<rect x="875" y="920" width="181" height="340" fill="#9a8c78"/>
<rect x="875" y="920" width="181" height="70" fill="#8a7a62"/>
<rect x="920" y="1020" width="30" height="200" fill="#d8d0c0"/><rect x="990" y="1020" width="30" height="200" fill="#d8d0c0"/>
<!-- hedge -->
<rect x="500" y="1260" width="556" height="120" fill="#3a4230"/>
<!-- ground -->
<rect x="0" y="1320" width="1056" height="135" fill="#c4bcac"/>
<polygon points="500,1380 1056,1360 1056,1455 620,1455" fill="#8a8680"/>
<!-- steps -->
<rect x="265" y="1225" width="250" height="160" fill="#c89858"/>
<g fill="#e4c488"><rect x="300" y="1245" width="180" height="10"/><rect x="300" y="1280" width="180" height="10"/><rect x="300" y="1315" width="180" height="10"/><rect x="300" y="1350" width="180" height="10"/></g>
<rect x="260" y="1160" width="30" height="225" fill="#b88848"/><rect x="460" y="1160" width="50" height="225" fill="#b88848"/>
</svg>
</div>
<div class="a cell" style="left:1149px;top:803px"><svg width="262" height="361" viewBox="0 0 1056 1455" preserveAspectRatio="none" style="position:absolute;left:49px;top:0">
<defs>
<linearGradient id="s5" x1="0" y1="0" x2="0" y2="1"><stop offset="0" stop-color="#84a8cc"/><stop offset="1" stop-color="#a4c0dc"/></linearGradient>
</defs>
<rect width="1056" height="1455" fill="url(#s5)"/>
<!-- left tree -->
<path d="M0 0 L330 0 L300 100 L260 250 L220 400 L200 600 L240 800 L260 900 L200 1050 L100 1100 L0 1100 Z" fill="#8aaa58"/>
<path d="M0 300 L120 250 L180 500 L150 800 L60 900 L0 850 Z" fill="#6a8a48" opacity="0.7"/>
<path d="M0 1000 L120 950 L250 880 L200 1050 L80 1150 L0 1150 Z" fill="#7a9a50"/>
<!-- right trees -->
<path d="M860 780 L930 600 L980 480 L1056 420 L1056 960 L870 960 Z" fill="#8aaa60"/>
<!-- right building -->
<polygon points="875,1020 960,920 1056,915 1056,1030" fill="#5a6068"/>
<rect x="875" y="1020" width="181" height="260" fill="#b06058"/>
<rect x="1000" y="1180" width="56" height="80" fill="#e0e0e0"/>
<rect x="890" y="1190" width="100" height="80" fill="#3a5a30"/>
<!-- left bits -->
<rect x="0" y="1060" width="120" height="220" fill="#a86058"/>
<!-- tower -->
<rect x="290" y="30" width="120" height="85" fill="#5a2c24"/>
<polygon points="240,110 490,115 465,280 230,280" fill="#6a3028"/>
<rect x="235" y="110" width="255" height="35" fill="#9a4030"/>
<rect x="185" y="270" width="345" height="40" fill="#8a3a2c"/>
<rect x="215" y="300" width="275" height="210" fill="#6a2e28"/>
<rect x="230" y="310" width="40" height="200" fill="#a84830"/><rect x="455" y="310" width="40" height="200" fill="#a84830"/>
<path d="M290 290 L290 260 Q362 200 435 260 L435 290 Z" fill="#c06040"/>
<rect x="312" y="295" width="98" height="200" fill="#e0e0e0"/>
<rect x="328" y="310" width="66" height="175" fill="#e8e8b0"/>
<!-- main roof -->
<polygon points="490,365 830,370 870,580 490,580" fill="#5a2a26"/>
<ellipse cx="590" cy="485" rx="36" ry="52" fill="#e0e0e8"/><ellipse cx="590" cy="490" rx="26" ry="44" fill="#e8e8b8"/>
<ellipse cx="730" cy="488" rx="32" ry="50" fill="#e0e0e8"/><ellipse cx="730" cy="492" rx="24" ry="42" fill="#e8e8b8"/>
<!-- cornice -->
<rect x="185" y="500" width="355" height="75" fill="#8a3428"/>
<rect x="490" y="565" width="425" height="60" fill="#8a3a2c"/>
<!-- body -->
<rect x="130" y="570" width="360" height="680" fill="#6a302a"/>
<rect x="485" y="620" width="380" height="630" fill="#6a302a"/>
<g fill="#b04a30"><rect x="235" y="580" width="35" height="670"/><rect x="455" y="580" width="40" height="670"/><rect x="820" y="625" width="40" height="625"/><rect x="140" y="1000" width="40" height="250"/></g>
<rect x="305" y="615" width="115" height="205" fill="#e8e8e8"/><rect x="322" y="630" width="80" height="185" fill="#6a7aa0"/><rect x="330" y="638" width="65" height="170" fill="#e8e8b0"/>
<rect x="515" y="660" width="100" height="180" fill="#e8e8e8"/><rect x="530" y="675" width="70" height="165" fill="#6a7aa0"/><rect x="538" y="683" width="55" height="152" fill="#e8e8b0"/>
<rect x="685" y="660" width="100" height="180" fill="#e8e8e8"/><rect x="700" y="675" width="70" height="165" fill="#6a7aa0"/><rect x="708" y="683" width="55" height="152" fill="#e8e8b0"/>
<rect x="490" y="835" width="400" height="55" fill="#8a3428"/>
<rect x="280" y="815" width="160" height="40" fill="#4a3a38"/>
<circle cx="300" cy="860" r="25" fill="#3a3838"/>
<rect x="220" y="885" width="685" height="50" fill="#7a3428"/>
<!-- first floor -->
<rect x="290" y="920" width="140" height="320" fill="#e8e4e0"/>
<rect x="310" y="985" width="100" height="255" fill="#2a1414"/>
<rect x="515" y="965" width="95" height="210" fill="#e8e8e8"/><rect x="530" y="980" width="65" height="190" fill="#6a7aa0"/><rect x="538" y="988" width="50" height="180" fill="#e8e8b0"/>
<rect x="690" y="965" width="95" height="210" fill="#e8e8e8"/><rect x="705" y="980" width="65" height="190" fill="#6a7aa0"/><rect x="713" y="988" width="50" height="180" fill="#e8e8b0"/>
<!-- porch rail -->
<rect x="495" y="1170" width="385" height="70" fill="#5a2a22"/>
<g stroke="#8a4a38" stroke-width="5"><path d="M520 1180 L520 1235"/><path d="M560 1180 L560 1235"/><path d="M600 1180 L600 1235"/><path d="M640 1180 L640 1235"/><path d="M680 1180 L680 1235"/><path d="M720 1180 L720 1235"/><path d="M760 1180 L760 1235"/><path d="M800 1180 L800 1235"/><path d="M840 1180 L840 1235"/></g>
<rect x="130" y="1240" width="760" height="60" fill="#c8c4c0"/>
<!-- ground -->
<rect x="0" y="1280" width="1056" height="175" fill="#5a8a40"/>
<rect x="0" y="1275" width="100" height="40" fill="#a8482c"/>
<rect x="520" y="1290" width="430" height="60" fill="#a8b890"/>
<polygon points="500,1350 1056,1340 1056,1380 520,1380" fill="#8a3a28"/>
<polygon points="600,1380 1056,1375 1056,1455 700,1455" fill="#8aa078"/>
<polygon points="275,1375 520,1375 600,1455 320,1455" fill="#d8dcdc"/>
<polygon points="520,1375 560,1375 720,1455 610,1455" fill="#9a3a28"/>
<!-- steps -->
<rect x="285" y="1240" width="180" height="130" fill="#d8d4d0"/>
<g fill="#8a5048"><rect x="290" y="1280" width="180" height="10"/><rect x="290" y="1315" width="180" height="10"/><rect x="290" y="1350" width="180" height="10"/></g>
<rect x="240" y="1180" width="50" height="195" fill="#b84030"/><rect x="450" y="1175" width="70" height="200" fill="#b84030"/>
<path d="M0 0 L260 0 L280 200 L230 420 L260 640 L240 900 L200 1000 L130 1050 L0 1060 Z" fill="#7c9c50" opacity="0.85"/>
<path d="M520 1300 L700 1280 L900 1290 L950 1340 L520 1350 Z" fill="#c8d0b8"/>
</svg>
</div>
</body></html>
